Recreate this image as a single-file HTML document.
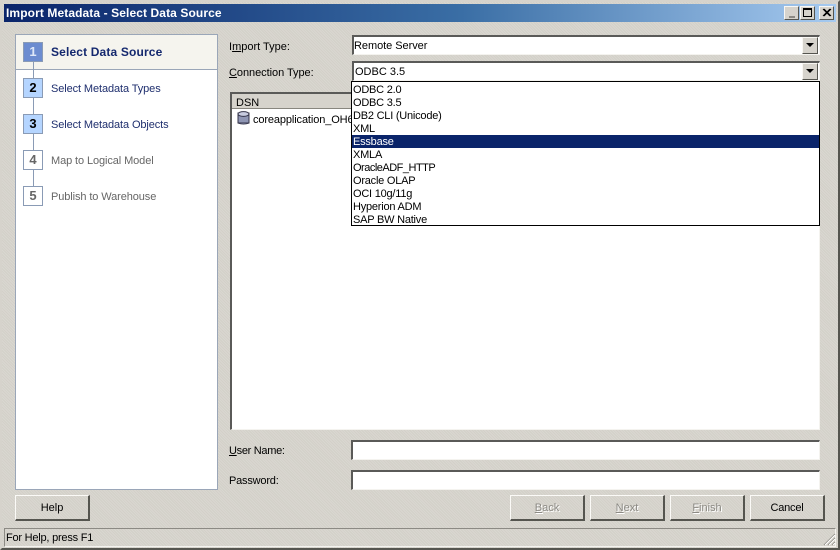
<!DOCTYPE html>
<html><head><meta charset="utf-8"><style>
html,body{margin:0;padding:0}
body{width:840px;height:550px;overflow:hidden;position:relative;background:#d6d3cc repeating-linear-gradient(45deg,#d3d0c8 0 1px,#d9d7d1 1px 2px);font-family:"Liberation Sans",sans-serif;font-size:11px;color:#000}
.a{position:absolute;box-sizing:border-box;white-space:nowrap}
.t{position:absolute;white-space:nowrap;line-height:14px}
.box{position:absolute;box-sizing:border-box;width:20px;height:20px;border:1px solid #8a9bb5;left:23px;text-align:center;font:bold 13px/18px "Liberation Sans",sans-serif}
.sunk{position:absolute;box-sizing:border-box;background:#fff;border-style:solid;border-width:2px 1px 1px 2px;border-color:#5a5a58 #f4f3ef #f4f3ef #5a5a58}
.btn{position:absolute;box-sizing:border-box;top:495px;height:26px;width:75px;text-align:center;line-height:25px;border-style:solid;border-width:1px 2px 2px 1px;border-color:#fbfaf7 #55554f #55554f #fbfaf7}
.dis{color:#8c8a84;text-shadow:1px 1px 0 #fff}
.li{position:absolute;left:352px;width:467px;height:13px;line-height:14px;padding-left:1px;box-sizing:border-box;background:#fff;letter-spacing:-.22px;overflow:hidden}
.arr{position:absolute;box-sizing:border-box;width:16px;height:17px;background:#d6d3cc;border-style:solid;border-width:1px;border-color:#f8f7f3 #55554f #55554f #f8f7f3}
.arr i{position:absolute;left:3px;top:5px;width:0;height:0;border-left:4px solid transparent;border-right:4px solid transparent;border-top:4px solid #000}
.wb{position:absolute;top:6px;width:15px;height:14px;box-sizing:border-box;background:#d6d3cc;border-style:solid;border-width:1px;border-color:#f8f7f3 #55554f #55554f #f8f7f3}
u{text-decoration:underline}
</style></head><body>
<div class="a" style="left:0;top:0;width:840px;height:550px;border:2px solid;border-color:#d6d3cc #55554f #55554f #d6d3cc"></div>
<div class="a" style="left:4px;top:4px;width:832px;height:18px;background:linear-gradient(90deg,#0a246a 0%,#3a6ea5 55%,#a6caf0 100%)"></div>
<div class="t" style="left:6px;top:6px;color:#fff;font-weight:bold;font-size:12px;letter-spacing:.1px">Import Metadata - Select Data Source</div>
<div class="wb" style="left:784px"><div class="a" style="left:4px;top:9px;width:6px;height:2px;background:#8c8a84"></div></div>
<div class="wb" style="left:800px"><div class="a" style="left:2px;top:1px;width:9px;height:9px;border:1px solid #000;border-top-width:2px"></div></div>
<div class="wb" style="left:819px"><svg class="a" style="left:2px;top:1px" width="10" height="10"><path d="M1 1L8 8M2 1L9 8M8 1L1 8M9 1L2 8" stroke="#000" fill="none"/></svg></div>

<div class="a" style="left:15px;top:34px;width:203px;height:456px;background:#fff;border:1px solid #9aa6b8"></div>
<div class="a" style="left:16px;top:35px;width:201px;height:35px;background:#f5f4ee;border-bottom:1px solid #9aa6b8"></div>
<div class="a" style="left:33px;top:60px;width:1px;height:130px;background:#8a9bb5"></div>
<div class="box" style="top:42px;background:#6c8cd0;color:#dfe8f8;">1</div>
<div class="box" style="top:78px;background:#b5d5ff;color:#000">2</div>
<div class="box" style="top:114px;background:#b5d5ff;color:#000">3</div>
<div class="box" style="top:150px;background:#fff;color:#666">4</div>
<div class="box" style="top:186px;background:#fff;color:#666">5</div>
<div class="t" style="left:51px;top:45px;font-weight:bold;color:#14286e;font-size:12px;letter-spacing:.15px">Select Data Source</div>
<div class="t" style="left:51px;top:82px;color:#1f2f6e;letter-spacing:-.1px">Select Metadata Types</div>
<div class="t" style="left:51px;top:118px;color:#1f2f6e;letter-spacing:-.1px">Select Metadata Objects</div>
<div class="t" style="left:51px;top:154px;color:#666;letter-spacing:-.1px">Map to Logical Model</div>
<div class="t" style="left:51px;top:190px;color:#666;letter-spacing:-.1px">Publish to Warehouse</div>

<div class="t" style="left:229px;top:40px">I<u>m</u>port Type:</div>
<div class="t" style="left:229px;top:66px;letter-spacing:-.05px"><u>C</u>onnection Type:</div>
<div class="sunk" style="left:352px;top:35px;width:468px;height:20px"></div>
<div class="t" style="left:354px;top:39px;letter-spacing:-.05px">Remote Server</div>
<div class="arr" style="left:802px;top:37px"><i></i></div>
<div class="sunk" style="left:352px;top:61px;width:468px;height:20px"></div>
<div class="t" style="left:355px;top:65px">ODBC 3.5</div>
<div class="arr" style="left:802px;top:63px"><i></i></div>

<div class="a" style="left:230px;top:92px;width:590px;height:338px;background:#fff;border-style:solid;border-width:2px 1px 1px 2px;border-color:#5a5a58 #f4f3ef #f4f3ef #5a5a58"></div>
<div class="a" style="left:232px;top:94px;width:120px;height:15px;background:#d6d3cc;border-bottom:1px solid #88867f"></div>
<div class="t" style="left:236px;top:96px">DSN</div>
<svg class="a" style="left:237px;top:111px" width="13" height="14"><rect x="1" y="2" width="11" height="10" fill="#8f96b4" stroke="#333348"/><ellipse cx="6.5" cy="3" rx="5.500" ry="2.400" fill="#c8cce0" stroke="#333348"/><path d="M1 12q5.500 2 11 0" stroke="#333348" fill="#8f96b4"/></svg>
<div class="t" style="left:253px;top:113px;width:98px;overflow:hidden;letter-spacing:-.12px">coreapplication_OH6</div>

<div class="a" style="left:351px;top:81px;width:469px;height:145px;background:#fff;border:1px solid #000"></div>
<div class="li" style="top:83px">ODBC 2.0</div>
<div class="li" style="top:96px">ODBC 3.5</div>
<div class="li" style="top:109px">DB2 CLI (Unicode)</div>
<div class="li" style="top:122px">XML</div>
<div class="li" style="top:135px;background:#0a246a;color:#fff">Essbase</div>
<div class="li" style="top:148px">XMLA</div>
<div class="li" style="top:161px;letter-spacing:-.5px">OracleADF_HTTP</div>
<div class="li" style="top:174px">Oracle OLAP</div>
<div class="li" style="top:187px">OCI 10g/11g</div>
<div class="li" style="top:200px">Hyperion ADM</div>
<div class="li" style="top:213px;height:12px">SAP BW Native</div>

<div class="t" style="left:229px;top:444px;letter-spacing:-.3px"><u>U</u>ser Name:</div>
<div class="t" style="left:229px;top:474px;letter-spacing:-.2px">Password:</div>
<div class="sunk" style="left:351px;top:440px;width:469px;height:20px"></div>
<div class="sunk" style="left:351px;top:470px;width:469px;height:20px"></div>

<div class="btn" style="left:15px">Help</div>
<div class="btn dis" style="left:510px"><u>B</u>ack</div>
<div class="btn dis" style="left:590px"><u>N</u>ext</div>
<div class="btn dis" style="left:670px"><u>F</u>inish</div>
<div class="btn" style="left:750px;letter-spacing:-.2px">Cancel</div>

<div class="a" style="left:4px;top:528px;width:832px;height:19px;border-style:solid;border-width:1px;border-color:#8c8a84 #f4f3ef #f4f3ef #8c8a84"></div>
<div class="t" style="left:6px;top:531px;letter-spacing:-.22px">For Help, press F1</div>
<svg class="a" style="left:823px;top:533px" width="13" height="13"><path d="M12 1L1 12M12 5L5 12M12 9L9 12" stroke="#88867f" fill="none"/><path d="M12 2L2 12M12 6L6 12M12 10L10 12" stroke="#fff" fill="none"/></svg>
</body></html>
